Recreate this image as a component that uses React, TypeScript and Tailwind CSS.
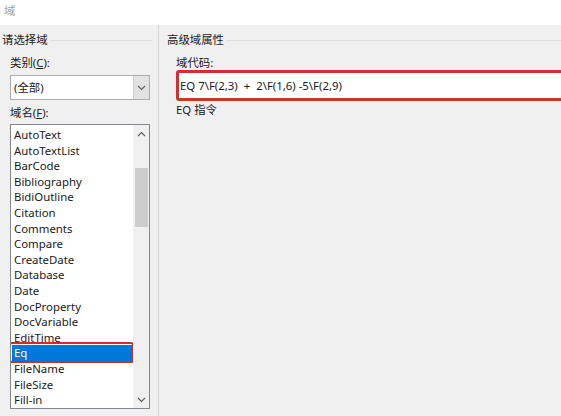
import React from 'react';

const FIELDS = [
  'AutoText',
  'AutoTextList',
  'BarCode',
  'Bibliography',
  'BidiOutline',
  'Citation',
  'Comments',
  'Compare',
  'CreateDate',
  'Database',
  'Date',
  'DocProperty',
  'DocVariable',
  'EditTime',
  'Eq',
  'FileName',
  'FileSize',
  'Fill-in',
];

function Chevron({ up }: { up?: boolean }) {
  return (
    <svg width="9" height="6" viewBox="0 0 9 6" className="block">
      <path
        d={up ? 'M1 5 L4.5 1.5 L8 5' : 'M1 1 L4.5 4.5 L8 1'}
        fill="none"
        stroke="#606060"
        strokeWidth="1.2"
      />
    </svg>
  );
}

function GroupTitle({ text }: { text: string }) {
  return (
    <div className="flex items-center h-[14px]">
      <span className="leading-[14px] pr-[3px]">{text}</span>
      <div className="flex-1 h-px bg-[#dcdcdc]" />
    </div>
  );
}

export default function App() {
  return (
    <div
      className="w-[561px] h-[416px] overflow-hidden flex flex-col bg-[#f0f0f0] text-[11.4px] text-[#1a1a1a]"
      style={{ fontFamily: '"Noto Sans", "Noto Sans CJK SC", sans-serif' }}
    >
      {/* Title bar */}
      <div className="h-[25px] bg-white px-[4px] pt-[4px] text-[#a0a0a0] leading-[14px]">域</div>

      <div className="flex-1 flex min-h-0">
        {/* Left: field picker */}
        <div className="w-[152px] pl-[2px] pt-[8px] flex flex-col">
          <GroupTitle text="请选择域" />

          <div className="pl-[8px] pt-[8px]">
            <div className="leading-[16px]">
              类别(<span className="underline">C</span>):
            </div>
            <div className="mt-[4px] h-[25px] w-[140px] flex border border-[#adadad] bg-white">
              <div className="flex-1 pl-[3px] leading-[23px]">(全部)</div>
              <div className="w-[16px] bg-[#e3e3e3] border-l border-[#d0d0d0] flex items-center justify-center">
                <Chevron />
              </div>
            </div>

            <div className="mt-[5px] leading-[16px]">
              域名(<span className="underline">F</span>):
            </div>
            <div className="mt-[3px] h-[285px] w-[140px] flex border border-[#828790] bg-white overflow-hidden">
              <div className="flex-1 pt-[2px] overflow-hidden">
                {FIELDS.map((f) =>
                  f === 'Eq' ? (
                    <div key={f} className="relative h-[15.6px]">
                      <div className="mx-[1px] h-[15.6px] bg-[#0078d7] text-white pl-[2px] leading-[15.6px]">
                        {f}
                      </div>
                      <span className="absolute -left-[2px] -right-[1px] -top-[3px] -bottom-[2px] border-[2px] border-[#c9302c] rounded-[3px]" />
                    </div>
                  ) : (
                    <div key={f} className="h-[15.6px] pl-[3px] leading-[15.6px]">
                      {f}
                    </div>
                  )
                )}
              </div>
              <div className="w-[16px] flex flex-col items-center bg-[#f0f0f0]">
                <div className="h-[17px] flex items-center">
                  <Chevron up />
                </div>
                <div className="mt-[26px] w-[13px] h-[59px] bg-[#cdcdcd]" />
                <div className="flex-1" />
                <div className="h-[17px] flex items-center">
                  <Chevron />
                </div>
              </div>
            </div>
          </div>
        </div>

        {/* Right: advanced properties */}
        <div className="flex-1 min-w-0 ml-[6px] border-l border-[#d5d5d5] pl-[8px] pt-[8px] overflow-hidden">
          <GroupTitle text="高级域属性" />
          <div className="pl-[9px] pt-[8px]">
            <div className="leading-[16px]">域代码:</div>
            <div className="mt-[-1px] h-[31px] w-[420px] border-[3px] border-[#cc3333] rounded-[3px] bg-white pl-[1px] leading-[25px] whitespace-pre">
              EQ 7\F(2,3)  +  2\F(1,6) -5\F(2,9)
            </div>
            <div className="mt-[1px] leading-[16px]">EQ 指令</div>
          </div>
        </div>
      </div>
    </div>
  );
}
